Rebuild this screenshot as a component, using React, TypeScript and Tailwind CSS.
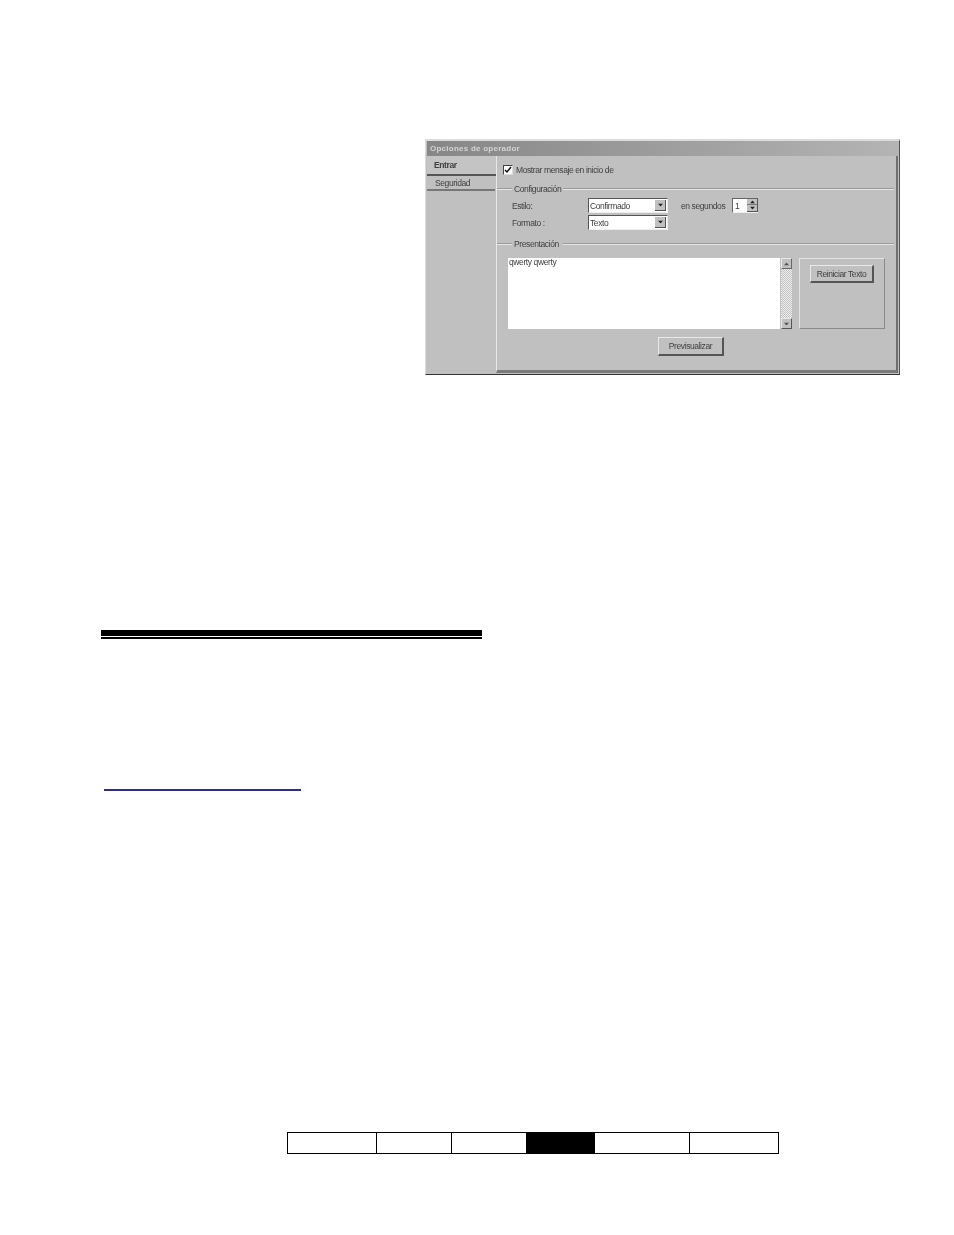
import * as React from "react"

const uiText = "font-['Liberation_Sans',Arial,sans-serif] text-[8.5px] leading-[12px] tracking-[-0.4px] text-[#404040] blur-[0.25px]"

function SectionLine({ label, className }: { label: string; className?: string }) {
  return (
    <div className={"flex items-center h-[12px] " + (className ?? "")}>
      <span className="w-[15px] h-[2px] bg-[#e6e6e6] border-t border-[#9a9a9a]" />
      <span className={uiText + " whitespace-nowrap pl-[2px] w-[51px]"}>{label}</span>
      <span className="flex-1 h-[2px] bg-[#e6e6e6] border-t border-[#9a9a9a]" />
    </div>
  )
}

function Arrow({ up, className }: { up?: boolean; className?: string }) {
  return (
    <svg viewBox="0 0 7 4" className={"w-[7px] h-[4px] " + (className ?? "")}>
      <path d={up ? "M3.5 0L7 4H0z" : "M0 0h7L3.5 4z"} fill="#222" />
    </svg>
  )
}

function Select({ value }: { value: string }) {
  return (
    <div className="w-[80px] h-[15px] flex items-center bg-white border-t border-l border-[#555] border-r border-r-[#eee] border-b border-b-[#eee] pl-[1px]">
      <span className={uiText + " flex-1"}>{value}</span>
      <span className="w-[11px] h-[11px] mr-[1px] bg-[#c0c0c0] border-r border-b border-[#555] flex items-center justify-center">
        <Arrow className="scale-75" />
      </span>
    </div>
  )
}

function Btn({ label, className }: { label: string; className?: string }) {
  return (
    <div
      className={
        "flex items-center justify-center bg-[#c0c0c0] border-t border-l border-[#e8e8e8] border-r-2 border-b-2 border-r-[#555] border-b-[#555] " +
        (className ?? "")
      }
    >
      <span className={uiText + " whitespace-nowrap"}>{label}</span>
    </div>
  )
}

function Dialog() {
  return (
    <div className="ml-[425px] w-[475px] h-[236px] flex flex-col bg-[#c0c0c0] border-t-2 border-l border-[#dcdcdc] border-r border-r-[#555] border-b border-b-[#333]">
      {/* title bar */}
      <div className="h-[15px] ml-[1px] flex items-center pl-[3px] bg-gradient-to-r from-[#878787] to-[#b4b4b4]">
        <span className="font-['Liberation_Sans',Arial,sans-serif] text-[8px] font-bold tracking-[0.25px] text-[#d4d4d4] blur-[0.25px]">
          Opciones de operador
        </span>
      </div>
      <div className="flex-1 flex ml-[1px]">
        {/* side tabs */}
        <div className="w-[69px] flex flex-col">
          <div className="h-[20px] pl-[7px] flex items-center bg-[#c4c4c4] border-b-2 border-[#555]">
            <span className={uiText + " font-bold text-[#222]"}>Entrar</span>
          </div>
          <div className="h-[15px] pl-[8px] mr-[1px] flex items-center border-b-2 border-[#777]">
            <span className={uiText}>Seguridad</span>
          </div>
        </div>
        {/* page */}
        <div className="flex-1 flex flex-col border-l border-[#e8e8e8] border-r-2 border-r-[#6e6e6e] border-b-[3px] border-b-[#7a7a7a] pl-[6px] pr-[2px] mr-[1px] mb-[1px]">
          <div className="mt-[9px] h-[10px] flex items-center">
            <span className="w-[10px] h-[10px] bg-white border-t border-l border-[#444] border-r border-b border-r-[#ddd] border-b-[#ddd] flex items-center justify-center">
              <svg viewBox="0 0 8 8" className="w-[8px] h-[8px]">
                <path d="M1 4l2 2 4-5" stroke="#111" strokeWidth="1.5" fill="none" />
              </svg>
            </span>
            <span className={uiText + " ml-[3px] whitespace-nowrap"}>Mostrar mensaje en inicio de</span>
          </div>
          <SectionLine label="Configuración" className="-ml-[6px] mt-[8px]" />
          <div className="mt-[3px] flex items-center h-[15px]">
            <span className={uiText + " ml-[9px] w-[76px]"}>Estilo:</span>
            <Select value="Confirmado" />
            <span className={uiText + " ml-[13px] w-[51px] whitespace-nowrap"}>en segundos</span>
            <div className="w-[26px] h-[15px] flex items-center bg-white border-t border-l border-[#666] border-b border-b-[#eee]">
              <span className={uiText + " flex-1 pl-[2px]"}>1</span>
              <span className="w-[11px] h-full flex flex-col bg-[#c0c0c0] border-r border-[#555]">
                <span className="h-[6px] flex items-center justify-center border-b border-[#777]">
                  <Arrow up className="scale-75" />
                </span>
                <span className="flex-1 flex items-center justify-center border-b border-[#555]">
                  <Arrow className="scale-75" />
                </span>
              </span>
            </div>
          </div>
          <div className="mt-[2px] flex items-center h-[15px]">
            <span className={uiText + " ml-[9px] w-[76px]"}>Formato :</span>
            <Select value="Texto" />
          </div>
          <SectionLine label="Presentación" className="-ml-[6px] mt-[8px]" />
          <div className="mt-[8px] flex h-[71px]">
            <div className="ml-[5px] w-[272px] bg-white pl-[1px]">
              <span className={uiText + " block -mt-[2px] whitespace-nowrap"}>qwerty qwerty</span>
            </div>
            <div className="ml-[1px] w-[11px] flex flex-col bg-[repeating-conic-gradient(#c0c0c0_0_25%,#f0f0f0_0_50%)] bg-[length:2px_2px]">
              <span className="h-[11px] bg-[#c0c0c0] border-t border-l border-[#e8e8e8] border-r border-b border-r-[#666] border-b-[#666] flex items-center justify-center">
                <Arrow up className="scale-75 opacity-70" />
              </span>
              <span className="flex-1" />
              <span className="h-[11px] bg-[#c0c0c0] border-t border-l border-[#e8e8e8] border-r border-b border-r-[#555] border-b-[#555] flex items-center justify-center">
                <Arrow className="scale-75 opacity-70" />
              </span>
            </div>
            <div className="ml-[7px] w-[86px] border border-t-[#e4e4e4] border-l-[#e4e4e4] border-r-[#8a8a8a] border-b-[#8a8a8a] pt-[6px] pl-[10px]">
              <Btn label="Reiniciar Texto" className="w-[64px] h-[18px]" />
            </div>
          </div>
          <Btn label="Previsualizar" className="mt-[8px] ml-[155px] w-[66px] h-[19px]" />
        </div>
      </div>
    </div>
  )
}

function PageNav() {
  const cells = [
    { w: "w-[89px]", dark: false },
    { w: "w-[75px]", dark: false },
    { w: "w-[75px]", dark: false },
    { w: "w-[68px]", dark: true },
    { w: "w-[95px]", dark: false },
    { w: "w-[88px]", dark: false },
  ]
  return (
    <div className="ml-[287px] mt-[341px] w-[492px] h-[22px] flex border border-black">
      {cells.map((c, i) => (
        <div key={i} className={c.w + (c.dark ? " bg-black" : " border-r border-black last:border-r-0")} />
      ))}
    </div>
  )
}

export default function App() {
  return (
    <div className="w-[954px] h-[1235px] bg-white pt-[139px] overflow-hidden">
      <Dialog />
      {/* heading rule */}
      <div className="ml-[101px] mt-[255px] w-[381px] h-[6px] bg-black" />
      <div className="ml-[101px] mt-[1px] w-[381px] h-[2px] bg-black" />
      {/* link underline */}
      <div className="ml-[104px] mt-[150px] w-[197px] h-[2px] bg-[#2b2f80]" />
      <PageNav />
    </div>
  )
}
